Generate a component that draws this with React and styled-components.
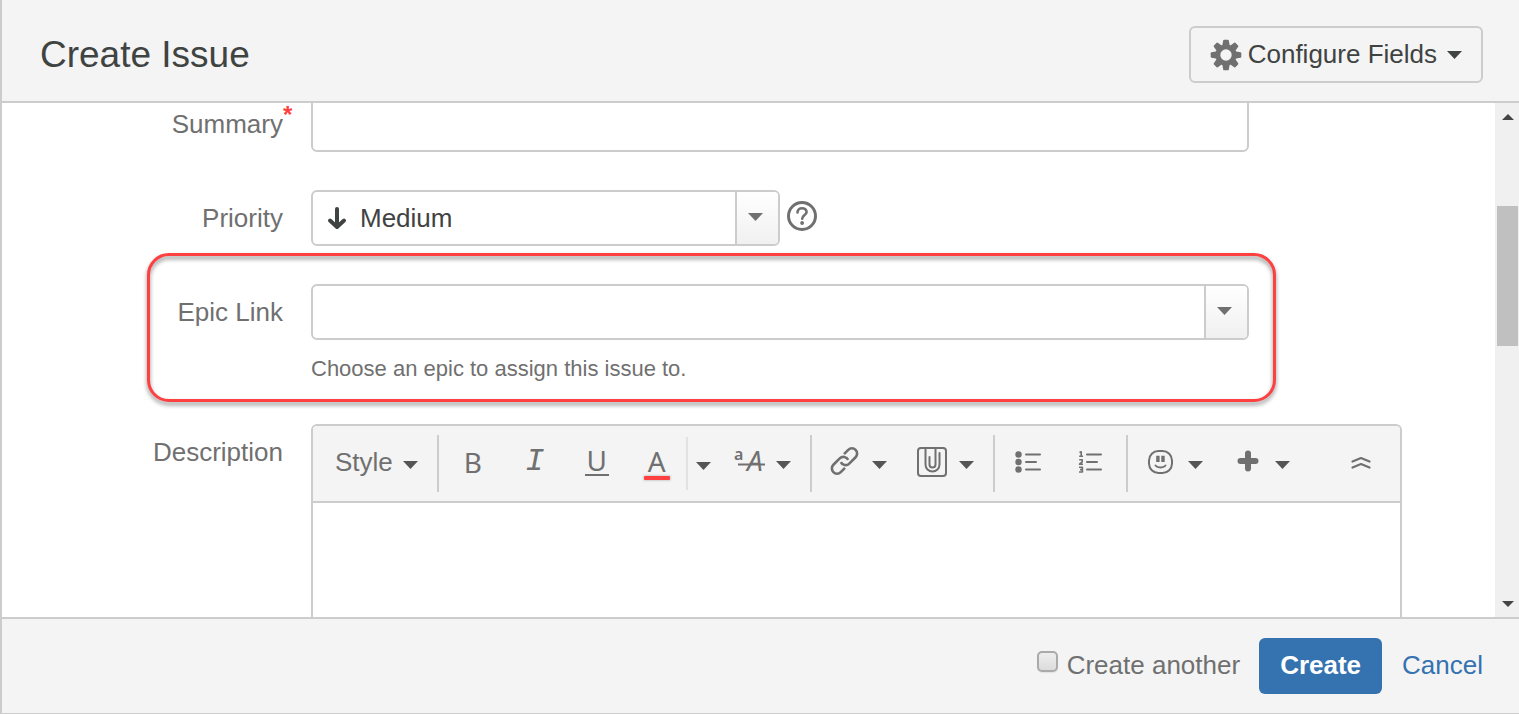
import React from "react";
import styled, { createGlobalStyle } from "styled-components";

const line = "#cccccc";
const panel = "#f4f4f4";
const muted = "#707070";
const dark = "#3f4341";

const GlobalStyle = createGlobalStyle`
  *, *::before, *::after { box-sizing: border-box; }
  body {
    margin: 0;
    background: #fff;
    color: ${muted};
    font: 26px/30px "Liberation Sans", Arial, sans-serif;
  }
  button, input, select, textarea { font: inherit; color: inherit; margin: 0; }
  svg { display: block; flex: none; overflow: visible; }
`;

const Dialog = styled.section`
  display: flex;
  flex-direction: column;
  height: 100vh;
  border-left: 2px solid ${line};
  border-bottom: 1px solid ${line};
`;

const Header = styled.header`
  display: flex;
  align-items: center;
  justify-content: space-between;
  padding: 26px 36px 18px 38px;
  background: ${panel};
  border-bottom: 2px solid ${line};
`;

const Title = styled.h1`
  margin: 0;
  font-size: 37px;
  line-height: 44px;
  font-weight: 400;
  color: ${dark};
`;

const ConfigureButton = styled.button`
  display: flex;
  align-items: center;
  gap: 6px;
  height: 57px;
  padding: 0 19px;
  border: 2px solid ${line};
  border-radius: 6px;
  background: transparent;
  color: ${dark};
`;

const ConfigureText = styled.span`
  padding: 0 4px 2px 0;
`;

const Body = styled.div`
  display: flex;
  flex: 1;
  min-height: 0;
`;

const ScrollArea = styled.div`
  flex: 1;
  min-width: 0;
  overflow: hidden;
`;

const Form = styled.form`
  display: flex;
  flex-direction: column;
  gap: 38px;
  margin-top: -7px;
  padding-right: 93px;
`;

const Row = styled.div`
  position: relative;
  display: grid;
  grid-template-columns: 281px minmax(0, 1fr);
  column-gap: 28px;
`;

const Label = styled.label`
  position: relative;
  justify-self: end;
  height: 56px;
  line-height: 56px;
`;

const Required = styled.span`
  position: absolute;
  left: 100%;
  top: 7px;
  font-size: 24px;
  line-height: 24px;
  font-weight: 700;
  color: #ff4040;
`;

const Field = styled.div`
  display: flex;
  align-items: center;
  gap: 6px;
  max-width: 938px;
`;

const TextInput = styled.input`
  flex: 1;
  min-width: 0;
  height: 56px;
  padding: 0 14px;
  border: 2px solid ${line};
  border-radius: 6px;
  background: #fff;
  outline: none;
`;

const Combo = styled.div`
  display: flex;
  align-items: center;
  flex: ${(p) => (p.$half ? "0 1 469px" : "1")};
  height: 56px;
  border: 2px solid ${line};
  border-radius: 6px;
  background: #fff;
  color: ${dark};
  overflow: hidden;
`;

const ComboSelect = styled.select`
  appearance: none;
  flex: 1;
  min-width: 0;
  height: 100%;
  padding: 0 13px;
  border: 0;
  background: transparent;
  outline: none;
`;

const ComboInput = styled.input`
  flex: 1;
  min-width: 0;
  height: 100%;
  padding: 0 14px;
  border: 0;
  background: transparent;
  outline: none;
`;

const PriorityMark = styled.span`
  padding-left: 14px;
`;

const Trigger = styled.button`
  display: flex;
  align-items: center;
  justify-content: center;
  width: 43px;
  height: 100%;
  padding: 0 4px 2px 0;
  border: 0;
  border-left: 2px solid ${line};
  background: linear-gradient(#fff, #f0f0f0);
  color: ${muted};
`;

const HelpButton = styled.button`
  padding: 0 0 4px;
  border: 0;
  background: transparent;
`;

const Hint = styled.p`
  margin: 12px 0 0;
  font-size: 22px;
  line-height: 34px;
`;

const Callout = styled.div`
  position: absolute;
  top: -31px;
  bottom: -16px;
  left: 145px;
  width: calc(100% - 145px);
  max-width: 1129px;
  border: 3px solid #ff4040;
  border-radius: 22px;
  filter: drop-shadow(0 3px 2px rgba(0, 0, 0, 0.45));
  pointer-events: none;
`;

const Editor = styled.div`
  border: 2px solid ${line};
  border-radius: 6px;
  overflow: hidden;
`;

const Toolbar = styled.div`
  display: flex;
  align-items: center;
  height: 77px;
  border-bottom: 2px solid ${line};
  background: ${panel};
`;

const Group = styled.div`
  display: flex;
  align-items: center;
  height: 57px;
  padding: 0 4px 0 3px;
  border-right: ${(p) => (p.$last ? "0" : `2px solid ${line}`)};
`;

const Tool = styled.button`
  display: flex;
  align-items: center;
  justify-content: center;
  height: 57px;
  width: 62px;
  padding: 0 0 4px;
  border: 0;
  background: transparent;
`;

const MenuTool = styled(Tool)`
  width: auto;
  gap: 11px;
  padding: 0 15px 3px;
`;

const StyleTool = styled(MenuTool)`
  gap: 10px;
  padding: 0 15px 3px 19px;
`;

const ColorTool = styled(Tool)`
  width: 58px;
`;

const ColorMenu = styled(Tool)`
  width: 33px;
  height: 53px;
  padding: 0;
  border-left: 2px solid #e2e2e2;
`;

const CollapseTool = styled(Tool)`
  margin: 0 8px 0 auto;
`;

const Glyph = styled.span`
  font-family: "Noto Sans", sans-serif;
  font-size: 28px;
  line-height: 30px;
  font-weight: 400;
`;

const ItalicGlyph = styled.span`
  font-family: "Liberation Mono", monospace;
  font-size: 32px;
  line-height: 32px;
  font-style: italic;
`;

const UnderlineGlyph = styled(Glyph)`
  width: 24px;
  line-height: 27px;
  border-bottom: 2px solid ${muted};
`;

const ColorGlyph = styled(Glyph)`
  display: flex;
  flex-direction: column;
  align-items: center;
  padding-top: 2px;

  &::after {
    content: "";
    width: 26px;
    height: 4px;
    border-radius: 1px;
    background: #ff4040;
    box-shadow: 0 0 2px 1px #d0d0d0;
  }
`;

const CaretIcon = styled.svg`
  margin-top: ${(p) => (p.$low ? "5px" : "0")};
`;

const EditorText = styled.textarea`
  display: block;
  width: 100%;
  height: 240px;
  padding: 14px;
  border: 0;
  outline: none;
  resize: none;
  background: #fff;
`;

const Scrollbar = styled.div`
  display: flex;
  flex-direction: column;
  width: 24px;
  padding: 0 1px 0 2px;
  background: #f0f0f0;
`;

const ScrollButton = styled.button`
  display: flex;
  align-items: center;
  justify-content: center;
  height: 27px;
  padding: 0;
  border: 0;
  background: transparent;
  color: #444;
`;

const ScrollTrack = styled.div`
  flex: 1;
  padding-top: 76px;
`;

const ScrollThumb = styled.div`
  height: 140px;
  background: #c0c0c0;
`;

const Footer = styled.footer`
  display: flex;
  align-items: center;
  justify-content: flex-end;
  padding: 19px 36px;
  border-top: 2px solid ${line};
  background: ${panel};
`;

const AnotherLabel = styled.label`
  display: flex;
  align-items: center;
  gap: 9px;
  padding-bottom: 2px;
  margin-right: 19px;
`;

const Checkbox = styled.input`
  appearance: none;
  width: 21px;
  height: 21px;
  margin-bottom: 8px;
  border: 2px solid #aaaaaa;
  border-radius: 5px;
  background: linear-gradient(#eeeeee, #dcdcdc);
  box-shadow: 0 1px 1px #e2e2e2;
`;

const CreateButton = styled.button`
  height: 56px;
  padding: 0 21px 2px;
  border: 0;
  border-radius: 6px;
  background: #3572b0;
  color: #fff;
  font-weight: 700;
`;

const CancelLink = styled.a`
  margin-left: 20px;
  padding-bottom: 2px;
  color: #3572b0;
  text-decoration: none;
`;

const Caret = ({ low }) => (
  <CaretIcon $low={low} width="15" height="8" viewBox="0 0 15 8" aria-hidden="true">
    <path d="M0 0H15L7.5 8Z" fill={low ? "#555" : "currentColor"} />
  </CaretIcon>
);

const Icon = ({ children, w = 31 }) => (
  <svg
    width={w}
    height="32"
    viewBox={`0 0 ${w} 32`}
    fill="none"
    stroke="currentColor"
    strokeWidth="2"
    strokeLinecap="round"
    strokeLinejoin="round"
    aria-hidden="true"
  >
    {children}
  </svg>
);

const Gear = () => (
  <svg width="32" height="32" viewBox="-16 -16 32 32" fill={muted} aria-hidden="true">
    <path
      fillRule="evenodd"
      d="M0-10.5A10.5 10.5 0 1 1 0 10.5A10.5 10.5 0 1 1 0-10.5ZM0-5.7A5.7 5.7 0 1 0 0 5.7A5.7 5.7 0 1 0 0-5.7Z"
    />
    {[0, 45, 90, 135, 180, 225, 270, 315].map((a) => (
      <path
        key={a}
        transform={`rotate(${a})`}
        d="M-3.8-9L-2.8-14.4Q-2.6-15.3-1.7-15.3H1.7Q2.6-15.3 2.8-14.4L3.8-9Z"
      />
    ))}
  </svg>
);

export default function App() {
  return (
    <>
      <GlobalStyle />
      <Dialog role="dialog" aria-labelledby="dialog-title">
        <Header>
          <Title id="dialog-title">Create Issue</Title>
          <ConfigureButton type="button">
            <Gear />
            <ConfigureText>Configure Fields</ConfigureText>
            <Caret />
          </ConfigureButton>
        </Header>

        <Body>
          <ScrollArea>
            <Form>
              <Row>
                <Label htmlFor="summary">
                  Summary<Required>*</Required>
                </Label>
                <Field>
                  <TextInput id="summary" type="text" />
                </Field>
              </Row>

              <Row>
                <Label htmlFor="priority">Priority</Label>
                <Field>
                  <Combo $half>
                    <PriorityMark>
                      <svg width="20" height="24" viewBox="0 0 20 24" fill="none" stroke={dark} strokeWidth="4" strokeLinecap="round" strokeLinejoin="round" aria-hidden="true">
                        <path d="M10 3V20M3 14.5L10 21L17 14.5" />
                      </svg>
                    </PriorityMark>
                    <ComboSelect id="priority" defaultValue="Medium">
                      <option>Medium</option>
                    </ComboSelect>
                    <Trigger type="button" aria-label="Show priorities">
                      <Caret />
                    </Trigger>
                  </Combo>
                  <HelpButton type="button" aria-label="Priority help">
                    <Icon w={32}>
                      <circle cx="16" cy="16" r="13.5" strokeWidth="3" />
                      <path d="M11.5 12.5C11.5 9.8 13.4 8.2 16 8.2C18.7 8.2 20.6 9.8 20.6 12C20.6 15 16.2 15.3 16.2 18.8" strokeWidth="2.6" />
                      <circle cx="16.1" cy="23" r="1.9" fill="currentColor" stroke="none" />
                    </Icon>
                  </HelpButton>
                </Field>
              </Row>

              <Row>
                <Label htmlFor="epic">Epic Link</Label>
                <div>
                  <Field>
                    <Combo>
                      <ComboInput id="epic" type="text" aria-describedby="epic-hint" />
                      <Trigger type="button" aria-label="Show epics">
                        <Caret />
                      </Trigger>
                    </Combo>
                  </Field>
                  <Hint id="epic-hint">Choose an epic to assign this issue to.</Hint>
                </div>
                <Callout />
              </Row>

              <Row>
                <Label htmlFor="description">Description</Label>
                <Editor>
                  <Toolbar role="toolbar" aria-label="Text formatting">
                    <Group>
                      <StyleTool type="button">
                        Style
                        <Caret low />
                      </StyleTool>
                    </Group>
                    <Group>
                      <Tool type="button" aria-label="Bold"><Glyph>B</Glyph></Tool>
                      <Tool type="button" aria-label="Italic"><ItalicGlyph>I</ItalicGlyph></Tool>
                      <Tool type="button" aria-label="Underline"><UnderlineGlyph>U</UnderlineGlyph></Tool>
                      <ColorTool type="button" aria-label="Text colour"><ColorGlyph>A</ColorGlyph></ColorTool>
                      <ColorMenu type="button" aria-label="More colours"><Caret low /></ColorMenu>
                      <MenuTool type="button" aria-label="More formatting">
                        <Icon>
                          <path d="M4 18.5H31" strokeLinecap="butt" />
                          <text x="0" y="14" fontFamily="Noto Sans, sans-serif" fontSize="16" fontWeight="600" fill="currentColor" stroke="none">a</text>
                          <text x="13" y="25" fontFamily="Noto Sans, sans-serif" fontSize="28" fontStyle="italic" fill="currentColor" stroke="none">A</text>
                        </Icon>
                        <Caret low />
                      </MenuTool>
                    </Group>
                    <Group>
                      <MenuTool type="button" aria-label="Link">
                        <Icon>
                          <g transform="translate(14.5 15) rotate(-45)" strokeWidth="2.6" strokeLinecap="butt">
                            <path d="M-4.5 5.2H-10.5A5.2 5.2 0 0 1 -10.5 -5.2H-1.5A5.2 5.2 0 0 1 3.4 1.8" />
                            <path d="M4.5 -5.2H10.5A5.2 5.2 0 0 1 10.5 5.2H1.5A5.2 5.2 0 0 1 -3.4 -1.8" />
                          </g>
                        </Icon>
                        <Caret low />
                      </MenuTool>
                      <MenuTool type="button" aria-label="Attachment">
                        <Icon>
                          <rect x="1" y="2" width="28" height="28" rx="3" />
                          <path d="M8.5 2V18.5A7 7 0 0 0 22.5 18.5V7M18.5 2V18.5A3 3 0 0 1 12.5 18.5V11" />
                        </Icon>
                        <Caret low />
                      </MenuTool>
                    </Group>
                    <Group>
                      <Tool type="button" aria-label="Bullet list">
                        <Icon w={27}>
                          <g fill="currentColor" stroke="none">
                            <circle cx="3.5" cy="8.5" r="3.2" />
                            <circle cx="3.5" cy="16" r="3.2" />
                            <circle cx="3.5" cy="23.5" r="3.2" />
                          </g>
                          <path d="M11 8.5H25M11 16H21M11 23.5H25" />
                        </Icon>
                      </Tool>
                      <Tool type="button" aria-label="Numbered list">
                        <Icon w={28}>
                          <path d="M10 8.5H24M10 16H20M10 23.5H24" />
                          <path d="M2.5 6.5L4.2 5.8V10M2.2 10.2H6M2.2 13.8H5.2V15.8L2.5 18.2H6M2 21.2H5.4V26H2M3 23.6H5.4" strokeWidth="1.6" strokeLinecap="butt" />
                        </Icon>
                      </Tool>
                    </Group>
                    <Group $last>
                      <MenuTool type="button" aria-label="Emoticon">
                        <Icon>
                          <rect x="3" y="5" width="23" height="22" rx="9.5" />
                          <path d="M11.9 9.8V16M17 9.8V16" strokeWidth="3.4" strokeLinecap="butt" />
                          <path d="M9.5 19.5C11.5 22.2 17.5 22.2 19.5 19.5" />
                        </Icon>
                        <Caret low />
                      </MenuTool>
                      <MenuTool type="button" aria-label="Insert">
                        <Icon>
                          <path d="M15 7.5V22.5M7.5 15H22.5" strokeWidth="6" />
                        </Icon>
                        <Caret low />
                      </MenuTool>
                    </Group>
                    <CollapseTool type="button" aria-label="Collapse toolbar">
                      <Icon w={20}>
                        <path d="M1.5 15.5L10 12L18.5 15.5M1.5 21.5L10 18L18.5 21.5" strokeWidth="2.2" />
                      </Icon>
                    </CollapseTool>
                  </Toolbar>
                  <EditorText id="description" />
                </Editor>
              </Row>
            </Form>
          </ScrollArea>

          <Scrollbar>
            <ScrollButton type="button" aria-label="Scroll up">
              <svg width="12" height="6" viewBox="0 0 12 6" fill="currentColor"><path d="M0 6H12L6 0Z" /></svg>
            </ScrollButton>
            <ScrollTrack>
              <ScrollThumb />
            </ScrollTrack>
            <ScrollButton type="button" aria-label="Scroll down">
              <svg width="12" height="6" viewBox="0 0 12 6" fill="currentColor"><path d="M0 0H12L6 6Z" /></svg>
            </ScrollButton>
          </Scrollbar>
        </Body>

        <Footer>
          <AnotherLabel>
            <Checkbox type="checkbox" />
            Create another
          </AnotherLabel>
          <CreateButton type="submit">Create</CreateButton>
          <CancelLink href="#cancel">Cancel</CancelLink>
        </Footer>
      </Dialog>
    </>
  );
}
